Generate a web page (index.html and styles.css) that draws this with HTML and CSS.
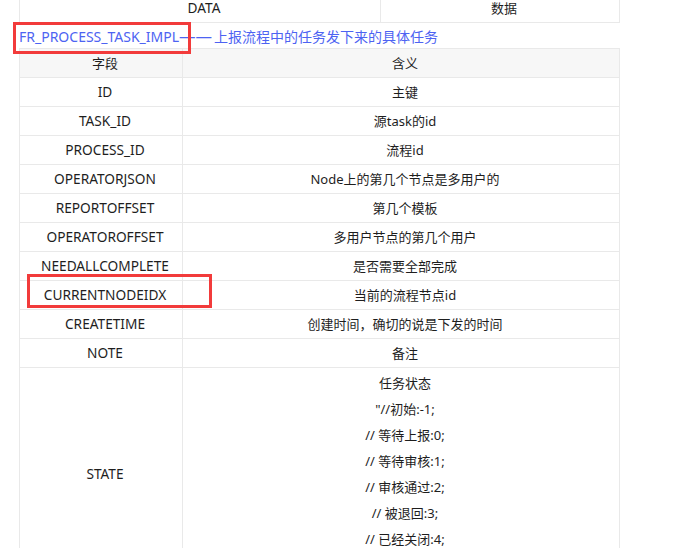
FILE: index.html
```html
<!DOCTYPE html>
<html lang="zh-CN">
<head>
<meta charset="utf-8">
<title>FR_PROCESS_TASK_IMPL</title>
<link rel="stylesheet" href="styles.css">
</head>
<body>
<div class="page">
  <table class="grid top">
    <colgroup><col class="c-a"><col class="c-b"></colgroup>
    <tr><td>DATA</td><td>数据</td></tr>
  </table>
  <div class="caption">FR_PROCESS_TASK_IMPL<span class="dash">——</span>上报流程中的任务发下来的具体任务</div>
  <table class="grid main">
    <colgroup><col class="c-1"><col class="c-2"></colgroup>
    <tr class="head"><td>字段</td><td>含义</td></tr>
    <tr><td>ID</td><td>主键</td></tr>
    <tr><td>TASK_ID</td><td>源task的id</td></tr>
    <tr><td>PROCESS_ID</td><td>流程id</td></tr>
    <tr><td>OPERATORJSON</td><td>Node上的第几个节点是多用户的</td></tr>
    <tr><td>REPORTOFFSET</td><td>第几个模板</td></tr>
    <tr><td>OPERATOROFFSET</td><td>多用户节点的第几个用户</td></tr>
    <tr><td>NEEDALLCOMPLETE</td><td>是否需要全部完成</td></tr>
    <tr><td>CURRENTNODEIDX</td><td>当前的流程节点id</td></tr>
    <tr><td>CREATETIME</td><td>创建时间，确切的说是下发的时间</td></tr>
    <tr><td>NOTE</td><td>备注</td></tr>
    <tr class="multi"><td>STATE</td><td>
      <div class="ln">任务状态</div>
      <div class="ln">"//初始:-1;</div>
      <div class="ln">// 等待上报:0;</div>
      <div class="ln">// 等待审核:1;</div>
      <div class="ln">// 审核通过:2;</div>
      <div class="ln">// 被退回:3;</div>
      <div class="ln">// 已经关闭:4;</div>
      <div class="ln">// 已经删除:5;"</div>
    </td></tr>
  </table>
  <div class="mark mark-title"></div>
  <div class="mark mark-field"></div>
</div>
</body>
</html>
```

FILE: styles.css
```css
html, body {
  margin: 0;
  padding: 0;
  background: #ffffff;
}
body {
  font-family: "Noto Sans", "Noto Sans CJK SC", sans-serif;
  font-size: 13px;
  color: #1e1e1e;
}
.page {
  position: relative;
  padding-left: 19px;
  margin-top: -7px;
}
.grid {
  border-collapse: collapse;
  table-layout: fixed;
  width: 600px;
}
.grid td {
  border: 1px solid #e9e9e9;
  text-align: center;
  vertical-align: middle;
  height: 28px;
  padding: 0 0 0 8px;
  box-sizing: border-box;
  line-height: 20px;
}
.grid tr td:first-child {
  height: 29px;
  font-size: 13.7px;
}
.top .c-a { width: 361px; }
.top .c-b { width: 239px; }
.main .c-1 { width: 163px; }
.main .c-2 { width: 437px; }
.head td { background: #f7f7f7; }
.main .head td:first-child { font-size: 13px; }
.caption {
  height: 25px;
  line-height: 25px;
  font-size: 14px;
  color: #4d63f2;
  white-space: nowrap;
}
.caption .dash {
  font-size: 16.5px;
  margin-right: 2px;
}
.multi td { padding-top: 2px; padding-bottom: 2px; }
.multi .ln {
  line-height: 26px;
}
.mark {
  position: absolute;
  border: 3px solid #f23b3b;
  box-sizing: border-box;
}
.mark-title {
  left: 13px;
  top: 29px;
  width: 178px;
  height: 32px;
}
.mark-field {
  left: 27px;
  top: 281px;
  width: 185px;
  height: 34px;
}
```
